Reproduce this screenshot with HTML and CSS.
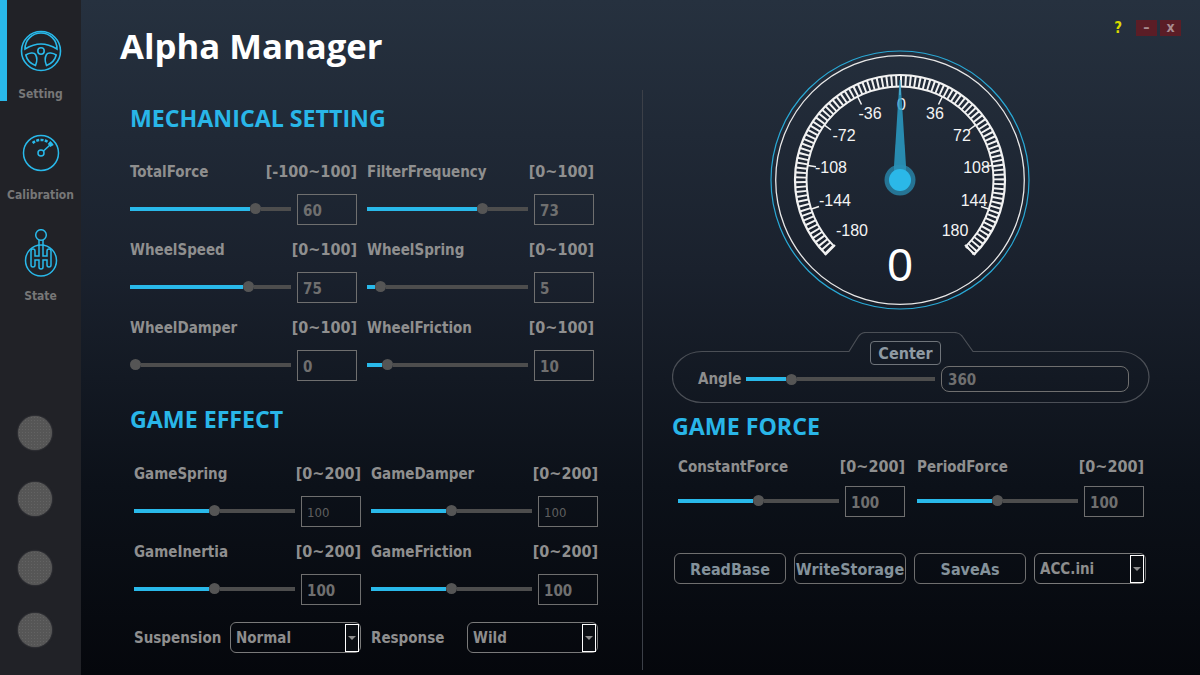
FILE: index.html
```html
<!DOCTYPE html>
<html lang="en">
<head>
  <meta charset="UTF-8" />
  <title>Alpha Manager</title>
  <link rel="stylesheet" href="styles.css">
</head>
<body>
  <div class="app">
    <nav class="sidebar">
      <div class="nav-item active">
        <svg class="nav-icon icon-wheel" width="42" height="42" viewBox="0 0 42 42" fill="none" stroke="#29b9ea" stroke-width="1.6">
          <circle cx="21" cy="21" r="19.500"/>
          <circle cx="21" cy="21" r="3.200"/>
          <path d="M5 19A16 16 0 0 1 37 19C31 15.500 26 14 21 14S11 15.500 5 19Z"/>
          <path d="M5.800 25C9 23 14 22 15.500 24.500C17.500 28 17 32 15.500 35.500C10 33.500 7 30 5.800 25Z"/>
          <path d="M36.200 25C33 23 28 22 26.500 24.500C24.500 28 25 32 26.500 35.500C32 33.500 35 30 36.200 25Z"/>
        </svg>
        <span>Setting</span>
      </div>
      <div class="nav-item">
        <svg class="nav-icon icon-dial" width="38" height="38" viewBox="0 0 38 38" fill="none" stroke="#29b9ea" stroke-width="1.500">
          <circle cx="19" cy="19" r="17.500"/>
          <circle cx="19" cy="19" r="3"/>
          <path d="M21.500 17L28 11"/>
          <path d="M10.600 9A13 13 0 0 1 26 8" stroke-width="2.400" stroke-dasharray="3 1.300"/>
          <path d="M27 8.500A13 13 0 0 1 30 12" stroke-width="4"/>
        </svg>
        <span>Calibration</span>
      </div>
      <div class="nav-item">
        <svg class="nav-icon icon-shifter" width="34" height="48" viewBox="0 0 34 48" fill="none" stroke="#29b9ea" stroke-width="1.500">
          <circle cx="17" cy="6" r="5.300"/>
          <circle cx="17" cy="31.500" r="15.500"/>
          <path d="M15 11V27H11V22A2 2 0 0 0 7 22V36A2 2 0 0 0 11 36V31H15V38A2 2 0 0 0 19 38V31H23V36A2 2 0 0 0 27 36V22A2 2 0 0 0 23 22V27H19V11"/>
        </svg>
        <span>State</span>
      </div>
      <div class="leds">
        <div class="led"></div>
        <div class="led"></div>
        <div class="led"></div>
        <div class="led"></div>
      </div>
    </nav>

    <main class="content">
      <section class="col-left">
        <h1>Alpha Manager</h1>
        <h2 class="heading-mech">MECHANICAL SETTING</h2>
        <div class="fields">
          <div class="field">
            <div class="field-head"><span>TotalForce</span><span class="range">[-100~100]</span></div>
            <div class="field-body">
              <div class="slider"><i style="width:74.500%"></i><b></b><u></u></div>
              <div class="num">60</div>
            </div>
          </div>
          <div class="field">
            <div class="field-head"><span>FilterFrequency</span><span class="range">[0~100]</span></div>
            <div class="field-body">
              <div class="slider"><i style="width:68.500%"></i><b></b><u></u></div>
              <div class="num">73</div>
            </div>
          </div>
          <div class="field">
            <div class="field-head"><span>WheelSpeed</span><span class="range">[0~100]</span></div>
            <div class="field-body">
              <div class="slider"><i style="width:70%"></i><b></b><u></u></div>
              <div class="num">75</div>
            </div>
          </div>
          <div class="field">
            <div class="field-head"><span>WheelSpring</span><span class="range">[0~100]</span></div>
            <div class="field-body">
              <div class="slider"><i style="width:5%"></i><b></b><u></u></div>
              <div class="num">5</div>
            </div>
          </div>
          <div class="field">
            <div class="field-head"><span>WheelDamper</span><span class="range">[0~100]</span></div>
            <div class="field-body">
              <div class="slider"><i style="width:0"></i><b></b><u></u></div>
              <div class="num">0</div>
            </div>
          </div>
          <div class="field">
            <div class="field-head"><span>WheelFriction</span><span class="range">[0~100]</span></div>
            <div class="field-body">
              <div class="slider"><i style="width:9.500%"></i><b></b><u></u></div>
              <div class="num">10</div>
            </div>
          </div>
        </div>

        <h2 class="heading-game">GAME EFFECT</h2>
        <div class="fields fields-game">
          <div class="field">
            <div class="field-head"><span>GameSpring</span><span class="range">[0~200]</span></div>
            <div class="field-body">
              <div class="slider"><i style="width:46.500%"></i><b></b><u></u></div>
              <div class="num num-thin">100</div>
            </div>
          </div>
          <div class="field">
            <div class="field-head"><span>GameDamper</span><span class="range">[0~200]</span></div>
            <div class="field-body">
              <div class="slider"><i style="width:46.500%"></i><b></b><u></u></div>
              <div class="num num-thin">100</div>
            </div>
          </div>
          <div class="field">
            <div class="field-head"><span>GameInertia</span><span class="range">[0~200]</span></div>
            <div class="field-body">
              <div class="slider"><i style="width:46.500%"></i><b></b><u></u></div>
              <div class="num">100</div>
            </div>
          </div>
          <div class="field">
            <div class="field-head"><span>GameFriction</span><span class="range">[0~200]</span></div>
            <div class="field-body">
              <div class="slider"><i style="width:46.500%"></i><b></b><u></u></div>
              <div class="num">100</div>
            </div>
          </div>
        </div>
        <div class="selects">
          <div class="select-row">
            <span class="select-label">Suspension</span>
            <div class="combo combo-wide"><span>Normal</span><div class="combo-arrow"></div></div>
          </div>
          <div class="select-row">
            <span class="select-label">Response</span>
            <div class="combo combo-wide"><span>Wild</span><div class="combo-arrow"></div></div>
          </div>
        </div>
      </section>

      <div class="divider"></div>

      <section class="col-right">
        <div class="win-controls">
          <span class="win-help">?</span>
          <span class="win-btn">&#8211;</span>
          <span class="win-btn">x</span>
        </div>

        <svg class="gauge" width="262" height="262" viewBox="-131 -131 262 262" fill="none">
          <circle r="129" stroke="#29a9d6" stroke-width="1.200"/>
          <circle r="124.300" stroke="#e8e8e8" stroke-width="1.300"/>
          <!-- scale band: two arcs, minor ticks are a dashed arc -->
          <g stroke="#f2f2f2">
            <path d="M-74.250 74.250A105 105 0 1 1 74.250 74.250" stroke-width="2.200"/>
            <path d="M-66.100 66.100A93.500 93.500 0 1 1 66.100 66.100" stroke-width="2"/>
            <path d="M-70.200 70.200A99.300 99.300 0 1 1 70.200 70.200" stroke-width="11" pathLength="100" stroke-dasharray=".42 .58"/>
          </g>
          <g stroke="#f2f2f2" stroke-width="1.500">
            <path d="M0-93V-85"/>
            <path d="M-42.200-83L-38.500-75.500M42.200-83L38.500-75.500"/>
            <path d="M-75.500-54.800L-69-50M75.500-54.800L69-50"/>
            <path d="M-92-14.600L-84-13.300M92-14.600L84-13.300"/>
            <path d="M-88.500 29L-81 26.500M88.500 29L81 26.500"/>
            <path d="M-75 75L-65 65M75 75L65 65" stroke-width="2"/>
          </g>
          <g class="gauge-nums" fill="#f4f4f4">
            <text x="1.500" y="-70">0</text>
            <text x="-30" y="-61">-36</text>
            <text x="35" y="-61">36</text>
            <text x="-56" y="-39">-72</text>
            <text x="62" y="-39">72</text>
            <text x="-69" y="-7">-108</text>
            <text x="76.500" y="-7">108</text>
            <text x="-65" y="26">-144</text>
            <text x="74" y="26">144</text>
            <text x="-48" y="56">-180</text>
            <text x="55" y="56">180</text>
          </g>
          <path d="M-.5-100H.5L6-14V0H-6V-14Z" fill="#2a9cc6" opacity=".85"/>
          <circle r="15.500" fill="#2a8fb5" opacity=".75"/>
          <circle r="11" fill="#2bb8e8"/>
          <text class="gauge-value" x="0" y="101" fill="#fff">0</text>
        </svg>

        <div class="angle-panel">
          <svg class="angle-frame" width="480" height="72" viewBox="0 0 480 72" fill="none">
            <path d="M30 19.500H177L186 5Q189 .5 194 .5H282Q287 .5 290 4L301 19.500H448A29 25.500 0 0 1 448 70.500H30A29.500 25.500 0 0 1 30 19.500Z" stroke="#4b4f56" stroke-width="1.200"/>
          </svg>
          <div class="center-btn">Center</div>
          <div class="angle-row">
            <span class="angle-label">Angle</span>
            <div class="slider slider-angle"><i style="width:21%"></i><b></b><u></u></div>
            <div class="angle-input">360</div>
          </div>
        </div>

        <h2 class="heading-force">GAME FORCE</h2>
        <div class="fields fields-force">
          <div class="field">
            <div class="field-head"><span>ConstantForce</span><span class="range">[0~200]</span></div>
            <div class="field-body">
              <div class="slider"><i style="width:46.500%"></i><b></b><u></u></div>
              <div class="num">100</div>
            </div>
          </div>
          <div class="field">
            <div class="field-head"><span>PeriodForce</span><span class="range">[0~200]</span></div>
            <div class="field-body">
              <div class="slider"><i style="width:46.500%"></i><b></b><u></u></div>
              <div class="num">100</div>
            </div>
          </div>
        </div>

        <div class="actions">
          <div class="action">ReadBase</div>
          <div class="action">WriteStorage</div>
          <div class="action">SaveAs</div>
          <div class="combo combo-file"><span>ACC.ini</span><div class="combo-arrow"></div></div>
        </div>
      </section>
    </main>
  </div>
</body>
</html>
```

FILE: styles.css
```css
* {
  box-sizing: border-box;
}

body {
  margin: 0;
  background-color: #05070c;
  font-family: "DejaVu Sans Condensed", "DejaVu Sans", sans-serif;
  font-stretch: condensed;
  font-weight: bold;
  font-size: 15px;
  color: #8d8d8d;
}

.app {
  display: flex;
  width: 1200px;
  height: 675px;
  overflow: hidden;
}

/* sidebar */
.sidebar {
  width: 81px;
  flex: none;
  background-color: #212227;
  display: flex;
  flex-direction: column;
}

.nav-item {
  width: 81px;
  height: 101px;
  flex: none;
  display: flex;
  flex-direction: column;
  align-items: center;
  justify-content: flex-end;
  font-size: 12px;
  line-height: 14px;
  color: #777;
  border-left: 7px solid transparent;
  padding-right: 7px;
}

.nav-item.active {
  border-left-color: #29b9ea;
}

.icon-wheel {
  margin-bottom: 15px;
}

.icon-dial {
  margin-bottom: 16px;
}

.icon-shifter {
  margin-bottom: 12px;
}

.leds {
  margin-top: 113px;
  padding-left: 18px;
  display: flex;
  flex-direction: column;
}

.led {
  width: 34px;
  height: 34px;
  flex: none;
  border-radius: 50%;
  background-color: #565656;
  background-image: radial-gradient(#636363 1px, transparent 1px);
  background-size: 3px 3px;
  box-shadow: 0 0 2px #505055;
  margin-bottom: 32px;
}

.led:nth-child(2) {
  margin-bottom: 35px;
}

.led:nth-child(3) {
  margin-bottom: 28px;
}

/* main area */
.content {
  flex: 1;
  display: flex;
  background: linear-gradient(#26313f 0, #1a212d 40%, #0c1119 72%, #05070c 100%);
}

h1 {
  margin: 0;
  padding-left: 39px;
  padding-top: 23px;
  font-family: "Open Sans", sans-serif;
  font-stretch: normal;
  font-size: 34.7px;
  line-height: 46px;
  color: #fff;
}

h2 {
  margin: 0;
  font-family: "Open Sans", sans-serif;
  font-stretch: normal;
  font-size: 23.2px;
  line-height: 30px;
  color: #29b6e8;
}

.col-left {
  width: 561px;
  flex: none;
}

.heading-mech {
  margin: 34px 0 0 49px;
}

.heading-game {
  margin: 9px 0 0 49px;
}

.fields {
  display: grid;
  grid-template-columns: 227px 227px;
  column-gap: 10px;
  margin: 28px 0 0 49px;
}

.fields-game {
  margin: 29px 0 0 53px;
}

.fields-force {
  column-gap: 12px;
  margin: 15px 0 0 6px;
}

.field {
  height: 78px;
}

.field-head {
  display: flex;
  justify-content: space-between;
  margin-top: 1px;
  line-height: 20px;
  color: #8f8f8f;
}

.range {
  font-size: 16px;
}

.field-body {
  display: flex;
  align-items: center;
  justify-content: space-between;
  margin-top: 12px;
}

.fields-force .field-body {
  margin-top: 9px;
}

/* slider: filled part, knob, rest of the track */
.slider {
  width: 161px;
  display: flex;
  align-items: center;
  height: 11px;
}

.field-body .slider {
  margin-bottom: 2px;
}

.slider i {
  height: 4px;
  background-color: #29b9ea;
}

.slider b {
  width: 11px;
  height: 11px;
  flex: none;
  border-radius: 50%;
  background-color: #555;
}

.slider u {
  flex: 1;
  height: 4px;
  background-color: #4d4d4d;
}

.num {
  width: 60px;
  height: 31px;
  border: 1px solid #6f6f6f;
  padding-left: 5px;
  font-size: 15px;
  line-height: 32px;
  color: #6f6f6f;
}

.num-thin {
  font-weight: normal;
  font-size: 13px;
  color: #5f5f5f;
}

.selects {
  display: flex;
  gap: 10px;
  margin: 3px 0 0 53px;
}

.select-row {
  width: 227px;
  display: flex;
  align-items: center;
  justify-content: space-between;
}

.select-label {
  color: #8f8f8f;
}

.combo {
  height: 31px;
  border: 1px solid #7a7a7a;
  border-radius: 6px;
  display: flex;
  align-items: center;
  justify-content: space-between;
  padding-left: 5px;
  padding-right: 1px;
  color: #8d8d8d;
}

.combo-wide {
  width: 131px;
}

.combo-arrow {
  width: 14px;
  height: 28px;
  border: 1px solid #fff;
  background-color: #0b0e13;
  display: flex;
  align-items: center;
  justify-content: center;
}

.combo-arrow::after {
  content: "";
  border-left: 4px solid transparent;
  border-right: 4px solid transparent;
  border-top: 4px solid #8d8d8d;
}

.divider {
  width: 1px;
  flex: none;
  background-color: #3c4048;
  margin-top: 90px;
  margin-bottom: 5px;
}

/* right column */
.col-right {
  flex: 1;
  padding-left: 29px;
  display: flex;
  flex-direction: column;
}

.win-controls {
  height: 18px;
  margin-top: 19px;
  padding-right: 19px;
  display: flex;
  justify-content: flex-end;
  align-items: center;
  gap: 3px;
  font-size: 14px;
}

.win-help {
  color: #d8d800;
  font-size: 15px;
  margin-right: 11px;
}

.win-btn {
  width: 21px;
  height: 16px;
  background-color: #5b1d26;
  color: #a88c90;
  text-align: center;
  line-height: 14px;
}

.gauge {
  display: block;
  margin-top: 12px;
  margin-left: 97px;
}

.gauge-nums text {
  font-family: "Liberation Sans", sans-serif;
  font-weight: normal;
  font-stretch: normal;
  font-size: 16px;
  text-anchor: middle;
}

.gauge-value {
  font-family: "Liberation Sans", sans-serif;
  font-weight: normal;
  font-stretch: normal;
  font-size: 46px;
  text-anchor: middle;
}

.angle-panel {
  position: relative;
  width: 480px;
  height: 72px;
  margin-top: 21px;
}

.angle-frame {
  position: absolute;
  left: 0;
  top: 0;
}

.center-btn {
  position: absolute;
  left: 198px;
  top: 9px;
  width: 71px;
  height: 24px;
  border: 1px solid #6f747a;
  border-radius: 4px;
  text-align: center;
  font-size: 16px;
  line-height: 23px;
  color: #8f9aa3;
}

.angle-row {
  position: absolute;
  left: 26px;
  top: 34px;
  display: flex;
  align-items: center;
}

.angle-label {
  width: 48px;
}

.slider-angle {
  width: 189px;
}

.angle-input {
  width: 188px;
  height: 26px;
  border: 1px solid #6f6f6f;
  border-radius: 8px;
  margin-left: 6px;
  padding-left: 6px;
  line-height: 27px;
  color: #6f6f6f;
}

.heading-force {
  margin-top: 7px;
}

.actions {
  display: flex;
  gap: 8px;
  margin: 19px 0 0 2px;
}

.action {
  width: 112px;
  height: 31px;
  border: 1px solid #6f6f6f;
  border-radius: 6px;
  text-align: center;
  line-height: 31px;
  font-size: 16px;
  color: #84929b;
}

.combo-file {
  width: 112px;
}
```
